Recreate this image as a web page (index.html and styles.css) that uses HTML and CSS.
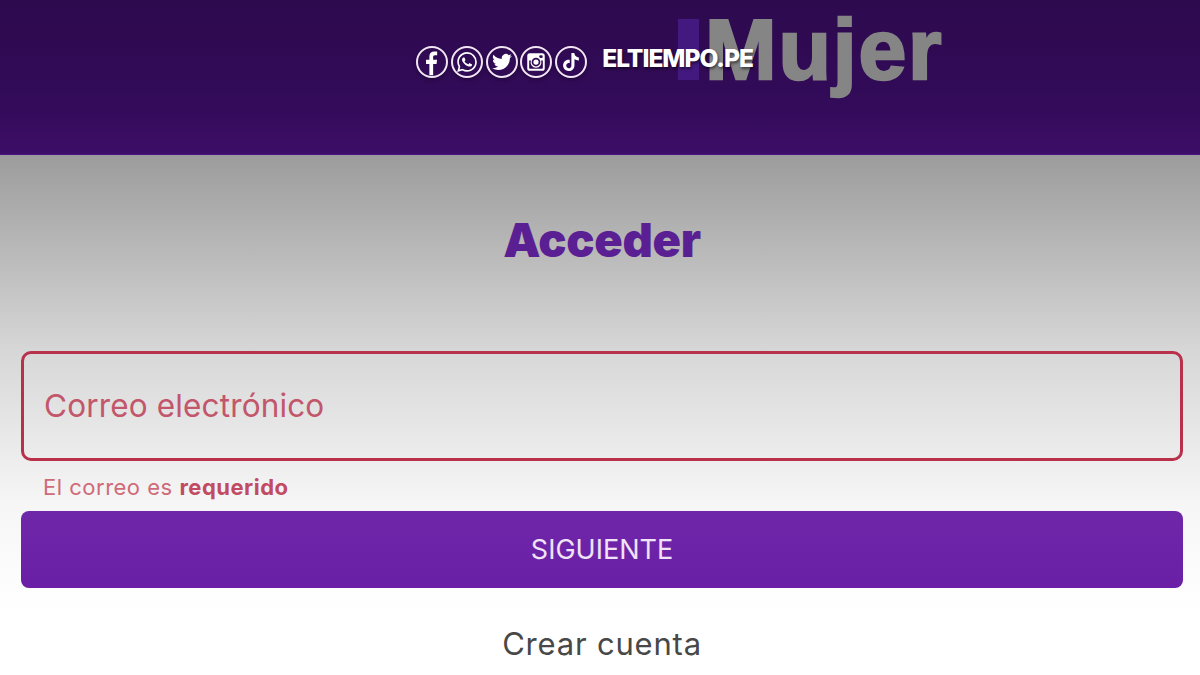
FILE: index.html
```html
<!DOCTYPE html>
<html lang="es">
<head>
    <meta charset="UTF-8">
    <meta name="viewport" content="width=device-width, initial-scale=1.0">
    <title>Acceder | ELTIEMPO.PE Mujer</title>
    <link rel="stylesheet" href="styles.css">
</head>
<body>
    <header class="topbar">
        <div class="logo-mujer"><span class="logo-bar"></span><span class="logo-word">Mujer</span></div>
        <div class="social">
            <a class="social-icon">
                <svg viewBox="0 0 32 32"><path d="M13 31V18.4H9.2v-5H13V9.8c0-3.9 2.3-5.8 5.6-5.8 1.6 0 3 .1 3.3.2v4.2h-2.4c-1.8 0-2.2.9-2.2 2.1v2.9h4.5l-.6 5h-3.9V31z"/></svg>
            </a>
            <a class="social-icon">
                <svg viewBox="-5 -5 34 34"><path d="M17.472 14.382c-.297-.149-1.758-.867-2.03-.967-.273-.099-.471-.148-.67.15-.197.297-.767.966-.94 1.164-.173.199-.347.223-.644.075-.297-.15-1.255-.463-2.39-1.475-.883-.788-1.48-1.761-1.653-2.059-.173-.297-.018-.458.13-.606.134-.133.298-.347.446-.52.149-.174.198-.298.298-.497.099-.198.05-.371-.025-.52-.075-.149-.669-1.612-.916-2.207-.242-.579-.487-.5-.669-.51-.173-.008-.371-.01-.57-.01-.198 0-.52.074-.792.372-.272.297-1.04 1.016-1.04 2.479 0 1.462 1.065 2.875 1.213 3.074.149.198 2.096 3.2 5.077 4.487.709.306 1.262.489 1.694.625.712.227 1.36.195 1.871.118.571-.085 1.758-.719 2.006-1.413.248-.694.248-1.289.173-1.413-.074-.124-.272-.198-.57-.347m-5.421 7.403h-.004a9.87 9.87 0 01-5.031-1.378l-.361-.214-3.741.982.998-3.648-.235-.374a9.86 9.86 0 01-1.51-5.26c.001-5.45 4.436-9.884 9.888-9.884 2.64 0 5.122 1.03 6.988 2.898a9.825 9.825 0 012.893 6.994c-.003 5.45-4.437 9.884-9.885 9.884m8.413-18.297A11.815 11.815 0 0012.05 0C5.495 0 .16 5.335.157 11.892c0 2.096.547 4.142 1.588 5.945L.057 24l6.305-1.654a11.882 11.882 0 005.683 1.448h.005c6.554 0 11.89-5.335 11.893-11.893a11.821 11.821 0 00-3.48-8.413z"/></svg>
            </a>
            <a class="social-icon">
                <svg viewBox="-5 -5 34 34"><path d="M23.953 4.57a10 10 0 01-2.825.775 4.958 4.958 0 002.163-2.723c-.951.555-2.005.959-3.127 1.184a4.92 4.92 0 00-8.384 4.482C7.69 8.095 4.067 6.13 1.64 3.162a4.822 4.822 0 00-.666 2.475c0 1.71.87 3.213 2.188 4.096a4.904 4.904 0 01-2.228-.616v.06a4.923 4.923 0 003.946 4.827 4.996 4.996 0 01-2.212.085 4.936 4.936 0 004.604 3.417 9.867 9.867 0 01-6.102 2.105c-.39 0-.779-.023-1.17-.067a13.995 13.995 0 007.557 2.209c9.053 0 13.998-7.496 13.998-13.985 0-.21 0-.42-.015-.63A9.935 9.935 0 0024 4.59z"/></svg>
            </a>
            <a class="social-icon">
                <svg viewBox="0 0 32 32"><path fill-rule="evenodd" d="M9 6h14a3 3 0 013 3v14a3 3 0 01-3 3H9a3 3 0 01-3-3V9a3 3 0 013-3zm12.2 2.2a1.6 1.6 0 100 3.2h1.2a1.2 1.2 0 001.2-1.2V9.4a1.2 1.2 0 00-1.2-1.2zM16 11a5 5 0 100 10 5 5 0 000-10zm-7.8 3.2V22.6c0 .7.5 1.2 1.2 1.2h13.2c.7 0 1.2-.5 1.2-1.2v-8.4h-2a6.2 6.2 0 11-11.6 0zM16 13a3 3 0 110 6 3 3 0 010-6z"/></svg>
            </a>
            <a class="social-icon">
                <svg viewBox="-6.5 -6.5 37 37"><path d="M12.525.02c1.31-.02 2.61-.01 3.91-.02.08 1.53.63 3.09 1.75 4.17 1.12 1.11 2.7 1.62 4.24 1.79v4.03c-1.44-.05-2.89-.35-4.2-.97-.57-.26-1.1-.59-1.62-.93-.01 2.92.01 5.84-.02 8.75-.08 1.4-.54 2.79-1.35 3.94-1.31 1.92-3.58 3.17-5.91 3.21-1.43.08-2.86-.31-4.08-1.03-2.02-1.19-3.44-3.37-3.65-5.71-.02-.5-.03-1-.01-1.49.18-1.9 1.12-3.72 2.58-4.96 1.66-1.44 3.98-2.13 6.15-1.72.02 1.48-.04 2.96-.04 4.44-.99-.32-2.15-.23-3.02.37-.63.41-1.11 1.04-1.36 1.75-.21.51-.15 1.07-.14 1.61.24 1.64 1.82 3.02 3.5 2.87 1.12-.01 2.19-.66 2.77-1.61.19-.33.4-.67.41-1.06.1-1.79.06-3.57.07-5.36.01-4.03-.01-8.05.02-12.07z"/></svg>
            </a>
        </div>
        <span class="brand">ELTIEMPO.PE</span>
    </header>

    <main class="login">
        <h1>Acceder</h1>
        <div class="field">Correo electrónico</div>
        <p class="field-error">El correo es <strong>requerido</strong></p>
        <button class="btn-next">SIGUIENTE</button>
        <a class="create-link">Crear cuenta</a>
    </main>
</body>
</html>
```

FILE: styles.css
```css
* {
    margin: 0;
    padding: 0;
    box-sizing: border-box;
    font-family: Inter, "Noto Sans", sans-serif;
}

body {
    width: 1200px;
    height: 675px;
    overflow: hidden;
    background: #fff;
}

.topbar {
    position: relative;
    display: flex;
    align-items: flex-start;
    height: 155px;
    padding: 46px 0 0 416px;
    background: linear-gradient(#2d0a4e, #330b5a 70%, #3e0e68);
    border-bottom: 1px solid #4a1480;
}

.logo-mujer {
    position: absolute;
    top: -1px;
    left: 678px;
    display: flex;
    align-items: center;
    gap: 6px;
}

.logo-word {
    color: #858585;
    font-family: "Liberation Sans", Arial, sans-serif;
    font-size: 86px;
    font-weight: 700;
    letter-spacing: 1.8px;
    line-height: 100px;
    -webkit-text-stroke: 2.5px #858585;
}

.logo-bar {
    width: 21px;
    height: 61px;
    background: #43197f;
}

.social {
    position: relative;
    display: flex;
    gap: 2.8px;
}

.social-icon {
    display: block;
    width: 32px;
    height: 32px;
    border: 2px solid #f3e6f3;
    border-radius: 50%;
    overflow: hidden;
    box-shadow: 0 2px 4px rgba(0, 0, 0, 0.3);
}

.social-icon svg {
    display: block;
    width: 100%;
    height: 100%;
    fill: #fff;
}

.brand {
    position: relative;
    margin: -3px 0 0 15px;
    color: #fff;
    font-size: 24.5px;
    font-weight: 800;
    letter-spacing: -1px;
    line-height: 30px;
    text-shadow: 1px 2px 3px rgba(0, 0, 0, 0.55);
}

.login {
    display: flex;
    flex-direction: column;
    height: 520px;
    padding: 0 17px 0 21px;
    background: linear-gradient(#9c9c9c, #d6d6d6 37%, #f6f6f6 67%, #fff 88%);
}

h1 {
    margin-top: 56px;
    color: #5a1f92;
    font-size: 47px;
    font-weight: 900;
    letter-spacing: -0.3px;
    line-height: 58px;
    text-align: center;
}

.field {
    display: flex;
    align-items: center;
    height: 110px;
    margin-top: 82px;
    padding: 0 20px 2px;
    border: 3px solid #b8304a;
    border-radius: 10px;
    color: #c2566b;
    font-size: 31.5px;
    letter-spacing: 0.15px;
}

.field-error {
    margin: 12px 0 0 22px;
    color: #cf6a78;
    font-size: 22px;
    letter-spacing: 0.5px;
    line-height: 28px;
}

.field-error strong {
    color: #c24b62;
    font-weight: 700;
}

.btn-next {
    height: 77px;
    margin-top: 10px;
    border: none;
    border-radius: 8px;
    background: linear-gradient(#6f27a9, #6a1fa6);
    color: #efe3f5;
    font-size: 27px;
    text-align: center;
}

.create-link {
    margin-top: 36px;
    color: #484848;
    font-size: 31px;
    letter-spacing: 0.8px;
    line-height: 40px;
    text-align: center;
}
```
